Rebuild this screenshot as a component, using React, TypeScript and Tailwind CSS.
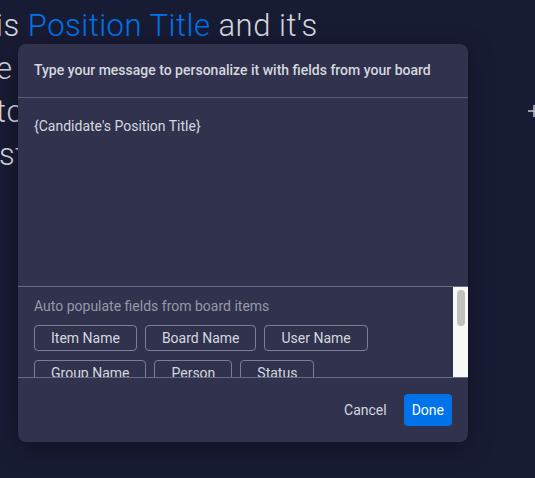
import React from "react";

const chips1 = ["Item Name", "Board Name", "User Name"];
const chips2 = ["Group Name", "Person", "Status"];

function Chip({ label }: { label: string }) {
  return (
    <div className="h-[26px] px-4 flex items-center rounded-[4px] border border-[#7b7f96] text-[14px] leading-none text-[#d5d8df] whitespace-nowrap">
      {label}
    </div>
  );
}

export default function App() {
  return (
    <div className="relative w-[535px] h-[478px] overflow-hidden bg-[#181b34] font-['Roboto','Liberation_Sans',sans-serif]">
      {/* background page */}
      <div className="flex justify-between">
        <div className="pt-[4px] text-[31px] leading-[43px] tracking-[0.5px] font-light text-[#d5d8df] whitespace-nowrap">
          <div className="-ml-[4px]">
            <span>is </span>
            <span className="text-[#0073ea] underline decoration-[#c5c7d0] decoration-1 underline-offset-[8px]">
              Position Title
            </span>
            <span> and it's</span>
          </div>
          <div className="-ml-[4px]">e</div>
          <div className="-ml-[4px]">tc</div>
          <div className="-ml-[1px]">st</div>
        </div>
        <div className="pt-[105px] -mr-[5px]">
          <svg width="12" height="12" viewBox="0 0 12 12" fill="none">
            <path d="M6 0v12M0 6h12" stroke="#c5c7d0" strokeWidth="1.5" />
          </svg>
        </div>
      </div>

      {/* modal */}
      <div className="absolute left-[18px] top-[44px] w-[450px] rounded-lg bg-[#30324e] shadow-[0_6px_24px_rgba(0,0,0,0.35)] flex flex-col overflow-hidden">
        <div className="h-[54px] px-4 flex items-center border-b border-[#585a73] text-[14px] font-medium text-[#d5d8df] whitespace-nowrap">
          Type your message to personalize it with fields from your board
        </div>
        <div className="h-[189px] px-4 pt-[18px] border-b border-[#676a82] text-[14px] leading-[20px] text-[#d5d8df]">
          {"{Candidate's Position Title}"}
        </div>
        <div className="h-[91px] flex border-b border-[#676a82]">
          <div className="flex-1 overflow-hidden px-4 pt-[9px]">
            <div className="text-[14px] leading-[20px] text-[#9699a6]">
              Auto populate fields from board items
            </div>
            <div className="mt-[9px] flex flex-col gap-[9px]">
              <div className="flex gap-2">
                {chips1.map((c) => (
                  <Chip key={c} label={c} />
                ))}
              </div>
              <div className="flex gap-2">
                {chips2.map((c) => (
                  <Chip key={c} label={c} />
                ))}
              </div>
            </div>
          </div>
          <div className="w-[15px] bg-[#f8f8f8] pt-[3px] flex justify-center">
            <div className="w-[8px] h-[36px] rounded-full bg-[#c1c1c1]" />
          </div>
        </div>
        <div className="h-[64px] flex items-center justify-end pr-4 gap-[17px]">
          <span className="text-[14px] text-[#d5d8df]">Cancel</span>
          <button className="h-[32px] px-2 rounded-[4px] bg-[#0073ea] text-[14px] text-white">
            Done
          </button>
        </div>
      </div>
    </div>
  );
}
